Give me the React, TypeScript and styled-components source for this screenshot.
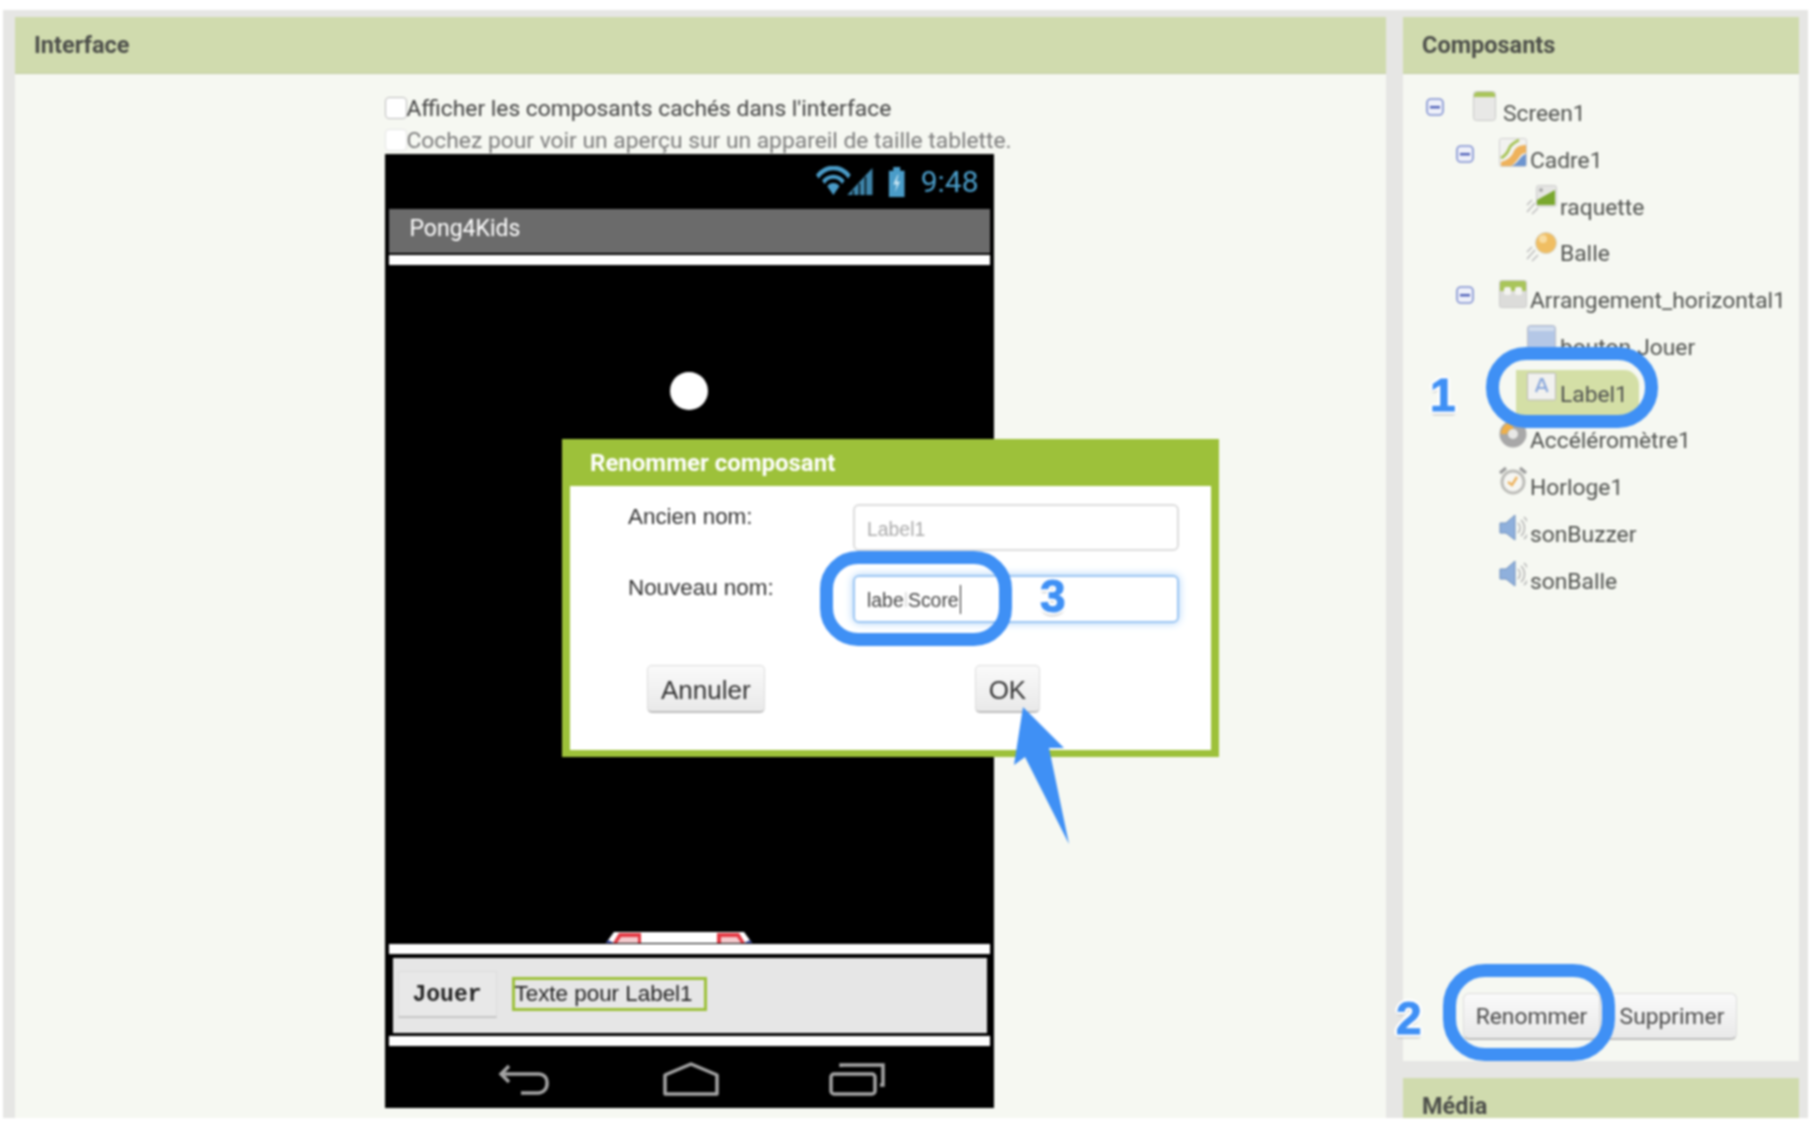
import styled, { createGlobalStyle } from 'styled-components'

const GlobalStyle = createGlobalStyle`
  html, body {
    margin: 0;
    padding: 0;
    background: #fff;
  }
  * {
    box-sizing: border-box;
  }
`

const BLUE = '#3f90f5'
const GREEN = '#9dc13a'

const Page = styled.div`
  position: relative;
  width: 1816px;
  height: 1138px;
  overflow: hidden;
  background: #fff;
  font-family: Roboto, 'Liberation Sans', sans-serif;
  filter: blur(0.8px);
`

const Workspace = styled.div`
  display: grid;
  grid-template-columns: 1371px 396px;
  column-gap: 17px;
  height: 1108px;
  margin: 10px 8px 20px 3px;
  padding: 7px 9px 0 12px;
  background: #e6e6e4;
  overflow: hidden;
`

const Panel = styled.section`
  display: flex;
  flex-direction: column;
  min-height: 0;
  background: #f6f8f2;
  overflow: hidden;
`

const PanelHeader = styled.h2`
  flex: none;
  height: 57px;
  margin: 0;
  padding: 0 19px;
  background: #d0dbae;
  border-bottom: 1px solid #c3cca6;
  font-size: 23.5px;
  font-weight: 700;
  line-height: 56px;
  color: #4d4f4a;
`

const InterfaceBody = styled.div`
  flex: 1;
  padding: 23px 0 0 369.5px;
`

const OptionRow = styled.label<{ $muted?: boolean }>`
  display: flex;
  align-items: center;
  height: 22px;
  margin-bottom: ${({ $muted }) => ($muted ? '3px' : '10px')};
  font-size: 22.8px;
  white-space: nowrap;
  color: ${({ $muted }) => ($muted ? '#7b7b7b' : '#444')};
`

const FakeCheck = styled.span<{ $muted?: boolean }>`
  flex: none;
  width: 22px;
  height: 22px;
  background: #fff;
  border: 1px solid ${({ $muted }) => ($muted ? '#e4e4e4' : '#bbb')};
  border-radius: 4px;
`

const Phone = styled.div`
  display: flex;
  flex-direction: column;
  width: 609px;
  height: 954px;
  background: #000;
`

const StatusBar = styled.div`
  flex: none;
  display: flex;
  align-items: center;
  justify-content: flex-end;
  height: 55px;
  padding: 0 15px 0 0;
  color: #4a9cc8;
  font-size: 30px;
`

const StatusTime = styled.span`
  margin-left: 13px;
`

const TitleBar = styled.div`
  flex: none;
  height: 44px;
  margin: 0 4px;
  padding-left: 21px;
  background: #6b6b6b;
  color: #fff;
  font-size: 23px;
  line-height: 40px;
`

const WhiteBar = styled.div<{ $top: number }>`
  flex: none;
  height: 10px;
  margin: ${({ $top }) => $top}px 4px 0;
  background: #fff;
`

const Canvas = styled.div`
  position: relative;
  flex: none;
  height: 678px;
`

const Ball = styled.div`
  position: absolute;
  left: 285px;
  top: 107px;
  width: 38px;
  height: 38px;
  border-radius: 50%;
  background: #fff;
`

const Paddle = styled.svg`
  position: absolute;
  left: 221px;
  bottom: 0;
`

const Arrangement = styled.div`
  flex: none;
  display: flex;
  align-items: center;
  height: 75px;
  margin: 4px 7px 3px 8px;
  padding: 0 0 3px 5px;
  background: #e6e6e6;
`

const PlayButton = styled.div`
  width: 99px;
  height: 47px;
  background: #e8e8e8;
  border: 1px solid #dcdcdc;
  border-bottom: 2px solid #c6c6c6;
  font-family: 'Liberation Mono', monospace;
  font-size: 23px;
  font-weight: 700;
  line-height: 47px;
  text-align: center;
  color: #222;
`

const SelectedLabel = styled.div`
  width: 195px;
  height: 34px;
  margin-left: 15px;
  border: 3px solid ${GREEN};
  font-family: 'Liberation Sans', sans-serif;
  font-size: 22.4px;
  line-height: 27px;
  white-space: nowrap;
  color: #222;
`

const NavBar = styled.div`
  flex: 1;
  display: flex;
  align-items: center;
  justify-content: center;
  gap: 110px;
  padding: 4px 0 0 3px;
`

const SideColumn = styled.div`
  display: flex;
  flex-direction: column;
  gap: 17px;
  min-height: 0;
`

const ComponentsPanel = styled(Panel)`
  flex: 1;
`

const MediaPanel = styled(Panel)`
  flex: none;
  height: 40px;
`

const Tree = styled.ul`
  flex: 1;
  margin: 0;
  padding: 16px 0 0;
  list-style: none;
`

const TreeRow = styled.li<{ $indent: number }>`
  display: flex;
  align-items: center;
  height: 46.8px;
  padding-left: ${({ $indent }) => 23 + $indent}px;
`

const ToggleSlot = styled.span`
  flex: none;
  display: flex;
  width: 43px;
  margin-bottom: 12px;
`

const TreeContent = styled.div<{ $selected?: boolean }>`
  display: flex;
  align-items: center;
  height: 49px;
  ${({ $selected }) =>
    $selected &&
    `
    margin-left: -10px;
    padding: 0 11px 0 10px;
    background: #d4dfa6;
    border-radius: 0 15px 15px 0;
  `}
`

const TreeIcon = styled.span<{ $w: number }>`
  flex: none;
  display: flex;
  width: ${({ $w }) => $w}px;
  margin-bottom: 14px;
`

const TreeLabel = styled.span`
  margin-left: 3px;
  font-size: 22.8px;
  white-space: nowrap;
  color: #50524f;
`

const ButtonBar = styled.div`
  flex: none;
  display: flex;
  padding: 0 0 21px 60px;
`

const GrayButton = styled.button<{ $inset?: number }>`
  width: 137px;
  height: 47px;
  padding: 0 0 0 ${({ $inset }) => $inset ?? 0}px;
  background: linear-gradient(#fafafa, #e9e9e9);
  border: 1px solid #dcdcdc;
  border-bottom: 2px solid #bdbdbd;
  border-radius: 6px;
  font-family: Roboto, sans-serif;
  font-size: 22.8px;
  color: #4a4a4a;
`

const Dialog = styled.div`
  position: absolute;
  left: 562px;
  top: 439px;
  width: 657px;
  height: 318px;
  background: #fff;
  border: solid ${GREEN};
  border-width: 0 8px 7px;
`

const DialogTitle = styled.div`
  height: 47px;
  margin: 0 -8px;
  padding-left: 28px;
  background: ${GREEN};
  color: #fff;
  font-size: 24px;
  font-weight: 700;
  line-height: 48px;
`

const Form = styled.div`
  display: grid;
  grid-template-columns: 225px 326px;
  row-gap: 24px;
  padding: 18px 0 0 58px;
`

const FieldLabel = styled.div`
  font-family: 'Liberation Sans', sans-serif;
  font-size: 22.4px;
  line-height: 26px;
  color: #333;
`

const FieldBox = styled.div<{ $focused?: boolean }>`
  height: ${({ $focused }) => ($focused ? '48px' : '47px')};
  padding-left: 12px;
  background: #fff;
  border: 2px solid ${({ $focused }) => ($focused ? '#9cc6f3' : '#dcdcdc')};
  border-radius: 6px;
  box-shadow: ${({ $focused }) => ($focused ? '0 0 8px #a9d0f8' : 'none')};
  font-family: 'Liberation Sans', sans-serif;
  font-size: 19.4px;
  line-height: 46px;
  white-space: nowrap;
  color: ${({ $focused }) => ($focused ? '#444' : '#aaa')};
`

const ErasedLetter = styled.span`
  color: #ddd;
`

const Caret = styled.span`
  display: inline-block;
  width: 1.5px;
  height: 29px;
  margin-left: 1px;
  vertical-align: -7px;
  background: #222;
`

const DialogActions = styled.div`
  display: flex;
  gap: 210px;
  margin-top: 42px;
  padding-left: 77px;
`

const DialogButton = styled.button`
  height: 48px;
  padding: 0 13px;
  background: linear-gradient(#fafafa, #e9e9e9);
  border: 1px solid #dcdcdc;
  border-bottom: 2px solid #bdbdbd;
  border-radius: 5px;
  font-family: 'Liberation Sans', sans-serif;
  font-size: 26px;
  line-height: 48px;
  color: #333;
`

const Ring = styled.div<{ $x: number; $y: number; $w: number; $h: number; $r: number }>`
  position: absolute;
  left: ${({ $x }) => $x}px;
  top: ${({ $y }) => $y}px;
  width: ${({ $w }) => $w}px;
  height: ${({ $h }) => $h}px;
  border: 13px solid ${BLUE};
  border-radius: ${({ $r }) => $r}px;
`

const StepNumber = styled.span<{ $x: number; $y: number }>`
  position: absolute;
  left: ${({ $x }) => $x}px;
  top: ${({ $y }) => $y}px;
  font-family: 'Liberation Sans', sans-serif;
  font-size: 46px;
  font-weight: 700;
  line-height: 46px;
  color: ${BLUE};
  -webkit-text-stroke: 1px ${BLUE};
  text-shadow: -3px 0 0 #fff, 3px 0 0 #fff, 0 -3px 0 #fff, 0 3px 0 #fff, -2px -2px 0 #fff, 2px -2px 0 #fff,
    -2px 2px 0 #fff, 2px 2px 0 #fff, 0 4px 2px #bbb;
`

const ArrowSvg = styled.svg`
  position: absolute;
  left: 1005px;
  top: 700px;
`

function MinusBox() {
  return (
    <svg width="18" height="18" viewBox="0 0 18 18">
      <rect x="1" y="1" width="16" height="16" rx="4" fill="#eef0fa" stroke="#7f8fd0" strokeWidth="1.6" />
      <rect x="4" y="8" width="10" height="2.4" fill="#4f60b8" />
    </svg>
  )
}

function ScreenIcon() {
  return (
    <svg width="31" height="30" viewBox="0 0 31 30">
      <rect x="4.5" y="0.5" width="22" height="29" rx="3" fill="#e8e8e6" stroke="#c8c8c8" />
      <path d="M5 6V3.5A3 3 0 0 1 8 1h15a3 3 0 0 1 3 3v2z" fill="#a9c55a" />
    </svg>
  )
}

function CanvasIcon() {
  return (
    <svg width="28" height="30" viewBox="0 0 28 30">
      <rect x="0.5" y="0.5" width="27" height="28" rx="2" fill="#f2f2f0" stroke="#cfcfcf" />
      <path d="M2 20C6 18 8 16 10 11 11 7 14 5 20 2" fill="none" stroke="#a9c55a" strokeWidth="3" />
      <path d="M2 24C8 22 12 20 15 13 17 9 21 7 27 7V15C20 15 20 23 12 28H2z" fill="#eeb25c" />
      <path d="M12 28C20 26 20 18 27 16V28z" fill="#6d95cf" />
    </svg>
  )
}

function SpriteLines() {
  return (
    <g stroke="#bbb" strokeWidth="1.4" fill="none">
      <path d="M1 27L9 18" />
      <path d="M6 29L12 23" />
      <path d="M1 20L6 15" />
    </g>
  )
}

function ImageSpriteIcon() {
  return (
    <svg width="31" height="30" viewBox="0 0 31 30">
      <SpriteLines />
      <rect x="10.5" y="0.5" width="20" height="21" rx="2" fill="#e5e5e3" stroke="#ccc" />
      <path d="M11 20V15L29 5V20z" fill="#7aa82e" />
      <circle cx="15" cy="5" r="2" fill="#aaa" />
    </svg>
  )
}

function BallIcon() {
  return (
    <svg width="31" height="30" viewBox="0 0 31 30">
      <SpriteLines />
      <circle cx="20" cy="11" r="10.5" fill="#f0be62" stroke="#d5d2c4" />
      <circle cx="17" cy="7" r="4" fill="#f8dca0" />
    </svg>
  )
}

function ArrangementIcon() {
  return (
    <svg width="28" height="28" viewBox="0 0 28 28">
      <rect x="0.5" y="0.5" width="27" height="27" rx="2" fill="#dcdcda" stroke="#cbcbcb" />
      <path d="M1 11V2.5A2 2 0 0 1 3 1h22a2 2 0 0 1 2 2v8z" fill="#a9c55a" />
      <rect x="5" y="7" width="7" height="8" rx="2" fill="#f4f4f0" />
      <rect x="16" y="7" width="7" height="8" rx="2" fill="#f4f4f0" />
    </svg>
  )
}

function ButtonIcon() {
  return (
    <svg width="31" height="30" viewBox="0 0 31 30">
      <rect x="1.5" y="0.5" width="28" height="29" rx="3" fill="#b4c7e6" stroke="#b9bcc6" />
      <rect x="3" y="2" width="25" height="4" fill="#d2dded" />
    </svg>
  )
}

function LabelIcon() {
  return (
    <svg width="31" height="30" viewBox="0 0 31 30">
      <rect x="1.5" y="1" width="28" height="27" rx="1" fill="#f1f1ef" stroke="#b9b9b9" />
      <path d="M10 20L15 7h1.5l5 13M11.5 16h8.5" fill="none" stroke="#8aa8dc" strokeWidth="2.2" />
    </svg>
  )
}

function AccelIcon() {
  return (
    <svg width="28" height="28" viewBox="0 0 28 28">
      <circle cx="14" cy="14" r="13.5" fill="#a8a8a8" />
      <path d="M2 14A12 12 0 0 1 14 2v7A6 6 0 0 0 8 14z" fill="#efb04a" />
      <circle cx="14" cy="14" r="5" fill="#e8e8e6" />
    </svg>
  )
}

function ClockIcon() {
  return (
    <svg width="28" height="30" viewBox="0 0 28 30">
      <path d="M1 7L7 2M27 7L21 2" stroke="#999" strokeWidth="3" />
      <circle cx="14" cy="16" r="11" fill="#f6f6f2" stroke="#bdbdb9" strokeWidth="3" />
      <path d="M9 16l4 3 5-8" fill="none" stroke="#eeb25c" strokeWidth="2.4" />
    </svg>
  )
}

function SoundIcon() {
  return (
    <svg width="28" height="28" viewBox="0 0 28 28">
      <path d="M1 9h6L16 1v25L7 19H1z" fill="#8fb0dc" stroke="#6f8fbe" />
      <path d="M19 9a7 7 0 0 1 0 10M22 6a11 11 0 0 1 0 16M25 3a15 15 0 0 1 0 22" fill="none" stroke="#b4b4b4" strokeWidth="1.5" />
    </svg>
  )
}

function StatusIcons() {
  return (
    <svg width="92" height="31" viewBox="0 0 106 32" preserveAspectRatio="none" fill="#4a9cc8">
      <path d="M0 9A26 26 0 0 1 40 9l-3 4A21 21 0 0 0 3 13z" />
      <path d="M7 15A17 17 0 0 1 33 15l-3 3.5A12 12 0 0 0 10 18.5z" />
      <path d="M13 21A9 9 0 0 1 27 21L20 30z" />
      <path d="M36 30L65 2v28z" opacity="0.85" />
      <path d="M43 30v-5M50 30V18M57 30V11" stroke="#000" strokeWidth="1.6" />
      <path d="M84 5h5V1h8v4h5v27H84z" />
      <path d="M94 9l-5 10h4l-2 8 6-11h-4l2-7z" fill="#c6e4f2" />
    </svg>
  )
}

function BackIcon() {
  return (
    <svg width="56" height="36" viewBox="0 0 56 36" fill="none" stroke="#a4a4a4" strokeWidth="3.5">
      <path d="M12 5L4 13l8 8" />
      <path d="M4 13h38a8 8 0 0 1 8 8v2a9 9 0 0 1-9 9H24" />
    </svg>
  )
}

function HomeIcon() {
  return (
    <svg width="56" height="36" viewBox="0 0 56 36" fill="none" stroke="#a4a4a4" strokeWidth="3.5">
      <path d="M28 3L54 14v19H2V14z" strokeLinejoin="round" />
    </svg>
  )
}

function RecentIcon() {
  return (
    <svg width="56" height="36" viewBox="0 0 56 36" fill="none" stroke="#a4a4a4" strokeWidth="3.5">
      <rect x="2" y="13" width="44" height="20" rx="3" />
      <path d="M12 6V4h42v20h-3" />
    </svg>
  )
}

const TREE = [
  { name: 'Screen1', indent: 0, toggle: true, w: 31, icon: <ScreenIcon /> },
  { name: 'Cadre1', indent: 30, toggle: true, w: 28, icon: <CanvasIcon /> },
  { name: 'raquette', indent: 57, w: 31, icon: <ImageSpriteIcon /> },
  { name: 'Balle', indent: 57, w: 31, icon: <BallIcon /> },
  { name: 'Arrangement_horizontal1', indent: 30, toggle: true, w: 28, icon: <ArrangementIcon /> },
  { name: 'bouton.Jouer', indent: 57, w: 31, icon: <ButtonIcon /> },
  { name: 'Label1', indent: 57, w: 31, selected: true, icon: <LabelIcon /> },
  { name: 'Accéléromètre1', indent: 30, w: 28, icon: <AccelIcon /> },
  { name: 'Horloge1', indent: 30, w: 28, icon: <ClockIcon /> },
  { name: 'sonBuzzer', indent: 30, w: 28, icon: <SoundIcon /> },
  { name: 'sonBalle', indent: 30, w: 28, icon: <SoundIcon /> }
]

export default function App() {
  return (
    <Page>
      <GlobalStyle />
      <Workspace>
        <Panel>
          <PanelHeader>Interface</PanelHeader>
          <InterfaceBody>
            <OptionRow>
              <FakeCheck />
              Afficher les composants cachés dans l'interface
            </OptionRow>
            <OptionRow $muted>
              <FakeCheck $muted />
              Cochez pour voir un aperçu sur un appareil de taille tablette.
            </OptionRow>
            <Phone>
              <StatusBar>
                <StatusIcons />
                <StatusTime>9:48</StatusTime>
              </StatusBar>
              <TitleBar>Pong4Kids</TitleBar>
              <WhiteBar $top={2} />
              <Canvas>
                <Ball />
                <Paddle width="146" height="11" viewBox="0 0 146 11">
                  <path d="M0 11L8 0h130l8 11z" fill="#fff" />
                  <path d="M7 11L13 1h22v10zM111 11V1h22l6 10z" fill="#e43a45" />
                  <path d="M11 11L15 5h17v6zM115 11V5h16l4 6z" fill="#f3c9cc" />
                  <path d="M0 11l2-3 6 3zM146 11l-2-3-6 3z" fill="#3b4aa0" />
                </Paddle>
              </Canvas>
              <WhiteBar $top={1} />
              <Arrangement>
                <PlayButton>Jouer</PlayButton>
                <SelectedLabel>Texte pour Label1</SelectedLabel>
              </Arrangement>
              <WhiteBar $top={0} />
              <NavBar>
                <BackIcon />
                <HomeIcon />
                <RecentIcon />
              </NavBar>
            </Phone>
          </InterfaceBody>
        </Panel>
        <SideColumn>
          <ComponentsPanel>
            <PanelHeader>Composants</PanelHeader>
            <Tree>
              {TREE.map((item) => (
                <TreeRow key={item.name} $indent={item.indent}>
                  <ToggleSlot>{item.toggle && <MinusBox />}</ToggleSlot>
                  <TreeContent $selected={item.selected}>
                    <TreeIcon $w={item.w}>{item.icon}</TreeIcon>
                    <TreeLabel>{item.name}</TreeLabel>
                  </TreeContent>
                </TreeRow>
              ))}
            </Tree>
            <ButtonBar>
              <GrayButton>Renommer</GrayButton>
              <GrayButton $inset={7}>Supprimer</GrayButton>
            </ButtonBar>
          </ComponentsPanel>
          <MediaPanel>
            <PanelHeader>Média</PanelHeader>
          </MediaPanel>
        </SideColumn>
      </Workspace>

      <Dialog>
        <DialogTitle>Renommer composant</DialogTitle>
        <Form>
          <FieldLabel>Ancien nom:</FieldLabel>
          <FieldBox>Label1</FieldBox>
          <FieldLabel>Nouveau nom:</FieldLabel>
          <FieldBox $focused>
            labe<ErasedLetter>l</ErasedLetter>Score
            <Caret />
          </FieldBox>
        </Form>
        <DialogActions>
          <DialogButton>Annuler</DialogButton>
          <DialogButton>OK</DialogButton>
        </DialogActions>
      </Dialog>

      <Ring $x={1486} $y={347} $w={172} $h={81} $r={40} />
      <Ring $x={1443} $y={964} $w={172} $h={97} $r={42} />
      <Ring $x={820} $y={551} $w={192} $h={95} $r={38} />
      <StepNumber $x={1430} $y={372}>1</StepNumber>
      <StepNumber $x={1396} $y={995}>2</StepNumber>
      <StepNumber $x={1040} $y={573}>3</StepNumber>
      <ArrowSvg width="70" height="150" viewBox="0 0 70 150">
        <path d="M18 7L59 48 44 48 64 144 20 57 9 65z" fill={BLUE} />
      </ArrowSvg>
    </Page>
  )
}
